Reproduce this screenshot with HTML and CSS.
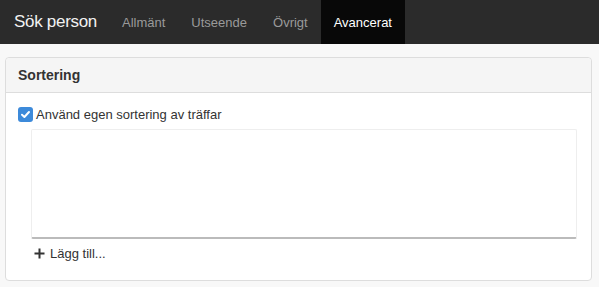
FILE: index.html
```html
<!DOCTYPE html>
<html lang="sv">
<head>
  <meta charset="UTF-8">
  <title>Sök person</title>
  <link rel="stylesheet" href="styles.css">
</head>
<body>

  <nav class="navbar">
    <span class="brand">Sök person</span>
    <a href="#" class="nav-link">Allmänt</a>
    <a href="#" class="nav-link">Utseende</a>
    <a href="#" class="nav-link">Övrigt</a>
    <a href="#" class="nav-link active">Avancerat</a>
  </nav>

  <!-- Sortering -->
  <div class="panel">
    <div class="panel-heading">Sortering</div>
    <div class="panel-body">
      <label class="check">
        <span class="checkbox">
          <svg width="11" height="11" viewBox="0 0 11 11"><path d="M2 5.8 L4.4 8 L9 3" fill="none" stroke="#fff" stroke-width="2" stroke-linecap="round" stroke-linejoin="round"/></svg>
        </span>
        Använd egen sortering av träffar
      </label>

      <div class="sort-list"></div>

      <a href="#" class="add-link">
        <svg width="11" height="11" viewBox="0 0 11 11"><path d="M5.5 0.5 V10.5 M0.5 5.5 H10.5" stroke="#333" stroke-width="2"/></svg>
        Lägg till...
      </a>
    </div>
  </div>

</body>
</html>
```

FILE: styles.css
```css
body {
  margin: 0;
  background-color: #f8f8f8;
  font-family: "Liberation Sans", Arial, sans-serif;
  color: #333;
}

.navbar {
  display: flex;
  align-items: stretch;
  height: 44px;
  background-color: #2b2b2b;
}
.brand {
  display: flex;
  align-items: center;
  padding: 0 12px 0 14px;
  font-size: 17px;
  letter-spacing: -0.3px;
  color: #f2f2f2;
}
.nav-link {
  display: flex;
  align-items: center;
  padding: 0 13px;
  font-size: 13px;
  color: #9a9a9a;
  text-decoration: none;
}
.nav-link.active {
  background-color: #080808;
  color: #fff;
}

.panel {
  margin: 13px 7px 0 5px;
  background-color: #fff;
  border: 1px solid #ddd;
  border-radius: 4px;
}
.panel-heading {
  height: 34px;
  line-height: 34px;
  padding: 0 12px;
  background-color: #f5f5f5;
  border-bottom: 1px solid #ddd;
  border-radius: 4px 4px 0 0;
  font-size: 14px;
  font-weight: bold;
}
.panel-body {
  padding: 14px 14px 19px 12px;
}

.check {
  display: flex;
  align-items: center;
  gap: 3px;
  font-size: 13px;
}
.checkbox {
  display: flex;
  align-items: center;
  justify-content: center;
  width: 15px;
  height: 15px;
  border-radius: 3px;
  background-color: #3d8ada;
}

.sort-list {
  height: 107px;
  margin: 7px 0 0 13px;
  border: 1px solid #eee;
  border-bottom: 2px solid #bbb;
  border-radius: 2px;
}

.add-link {
  display: flex;
  align-items: center;
  gap: 5px;
  margin: 7px 0 0 16px;
  font-size: 13px;
  color: #333;
  text-decoration: none;
}
```
